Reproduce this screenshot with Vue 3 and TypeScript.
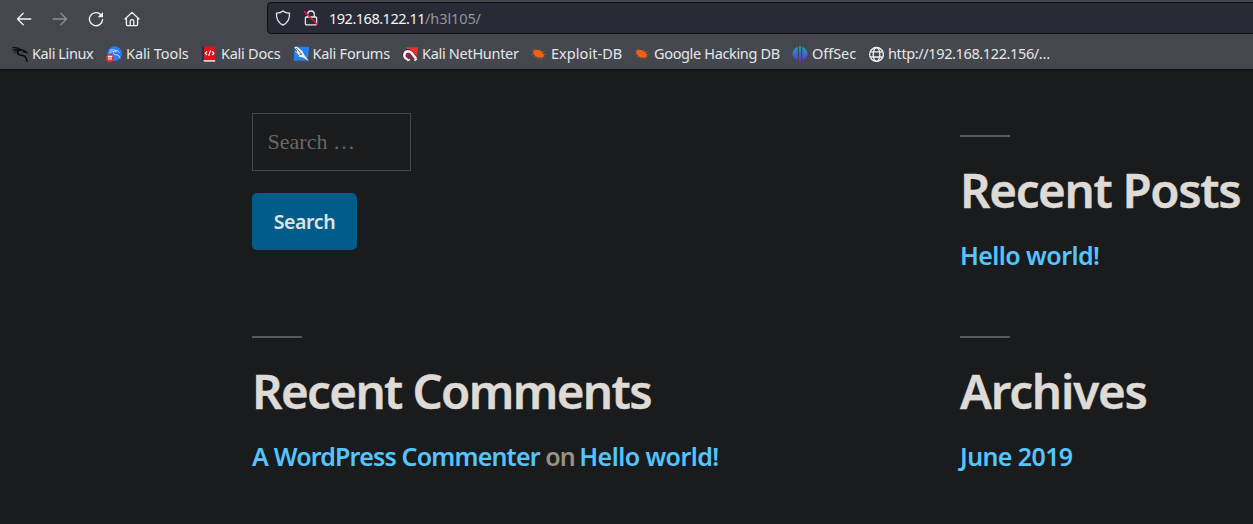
<script setup lang="ts">
interface Bookmark {
  label: string
  icon: 'kali' | 'tools' | 'docs' | 'forums' | 'nethunter' | 'bug' | 'offsec' | 'globe'
  width: number
  tracking: number
}

const bookmarks: Bookmark[] = [
  { label: 'Kali Linux', icon: 'kali', width: 94, tracking: -0.4 },
  { label: 'Kali Tools', icon: 'tools', width: 95, tracking: -0.1 },
  { label: 'Kali Docs', icon: 'docs', width: 91.5, tracking: -0.25 },
  { label: 'Kali Forums', icon: 'forums', width: 109.5, tracking: -0.25 },
  { label: 'Kali NetHunter', icon: 'nethunter', width: 129, tracking: -0.3 },
  { label: 'Exploit-DB', icon: 'bug', width: 103, tracking: 0.05 },
  { label: 'Google Hacking DB', icon: 'bug', width: 158, tracking: -0.35 },
  { label: 'OffSec', icon: 'offsec', width: 76, tracking: -0.05 },
  { label: 'http://192.168.122.156/…', icon: 'globe', width: 182, tracking: -0.38 },
]
</script>

<template>
  <div class="window">
    <header class="chrome">
      <div class="nav">
        <div class="buttons">
          <svg class="btn" viewBox="0 0 16 16"><path d="M14.8 8H1.7M7.2 2.3 1.5 8l5.7 5.7" /></svg>
          <svg class="btn dim" viewBox="0 0 16 16"><path d="M1.2 8h13.1M8.8 2.3 14.5 8l-5.7 5.7" /></svg>
          <svg class="btn" viewBox="0 0 16 16">
            <path d="M12.900 3.700A6.600 6.600 0 1 0 14.600 8.600" />
            <path d="M15 1v5.300H9.700z" class="solid" />
          </svg>
          <svg class="btn" viewBox="0 0 16 16">
            <path d="M1 8 8 1.400 15 8M2.400 7v6.300a1.300 1.300 0 0 0 1.300 1.300h8.600a1.300 1.300 0 0 0 1.300-1.300V7M6.200 14.500V10.500a1.800 1.800 0 0 1 3.600 0v4" />
          </svg>
        </div>
        <div class="address">
          <svg class="shield" viewBox="0 0 16 16"><path d="M8 .9C9.700 2.300 12 3 14.500 3.100c.3 5.400-1.300 9.500-6.500 12C2.800 12.600 1.200 8.500 1.500 3.100 4 3 6.300 2.300 8 .9z" /></svg>
          <svg class="lock" viewBox="0 0 16 16">
            <path d="M4.700 7V4.300a3.300 3.300 0 0 1 6.600 0V7M3.300 7h9.400a.9.9 0 0 1 .9.9v5.700a1.200 1.200 0 0 1-1.200 1.200H3.600a1.200 1.200 0 0 1-1.200-1.200V7.900a.9.9 0 0 1 .9-.9z" />
            <path d="M1.200 1.400 14.800 15" class="slash" />
          </svg>
          <span class="host">192.168.122.11</span><span class="path">/h3l105/</span>
        </div>
      </div>

      <nav class="bookmarks">
        <div v-for="b in bookmarks" :key="b.label" class="bookmark" :style="{ width: b.width + 'px' }">
          <svg v-if="b.icon === 'kali'" class="fav" viewBox="0 0 16 16" fill="none" stroke="#08090b" stroke-linecap="round">
            <path d="M.7 1.700C4 1.300 6.500 2 9 3.700" stroke-width="1.100" />
            <path d="M.8 4.300c3-1.300 5.500-.7 8 .2" stroke-width="1.100" />
            <path d="M2.200 6.800c1.400-1.200 2.600-1.800 4-2" stroke-width=".9" />
            <path d="M8 4.200c2.400-.9 4.200-.2 6.500 2.200l-3.300-.8" stroke-width="1.200" />
            <path d="M6.500 4.500C4.500 7.400 6 9.200 9.500 9.200c3.500.1 5 2.100 5.400 6" stroke-width="1.500" />
          </svg>
          <svg v-else-if="b.icon === 'tools'" class="fav" viewBox="0 0 16 16">
            <circle cx="8.700" cy="7.600" r="7.300" fill="#287cf4" />
            <path d="M3.500 4.500c3-1.300 5-.6 7 .7M3 7.200c2.700-2 5-1.900 7-1.500M8 5.200c-1.500 2.500.2 3.600 2.500 3.700 2.200.1 3.200 1.500 3.500 3.500M10 4.700c1.500-.2 2.500.6 3.500 2" fill="none" stroke="#d9e9ff" stroke-width=".9" />
            <circle cx="4" cy="11.900" r="4" fill="#e42f3b" />
            <path d="M1.700 10.300h4.600M3 10.300v3.600M5 10.300v3.600" stroke="#fff" stroke-width="1" fill="none" />
          </svg>
          <svg v-else-if="b.icon === 'docs'" class="fav" viewBox="0 0 16 16">
            <path d="M1.200.4h2.300v15.400l-2.300-1.200z" fill="#252b59" />
            <path d="M3 .4h11.200v13.500H3z" fill="#de1418" />
            <path d="M2 13.900h12.200v1.900H3.200z" fill="#d8d2d5" />
            <path d="m6 5.300-1.700 1.900 1.700 1.800M9.500 4.400 7.700 9.900M11.200 5.300l1.700 1.900-1.700 1.800" fill="none" stroke="#fff" stroke-width="1.200" />
          </svg>
          <svg v-else-if="b.icon === 'forums'" class="fav" viewBox="0 0 16 16">
            <path d="M1.500.8H16.400L14.500 14.800H.7z" fill="#2380f0" />
            <path d="M.7.900 4.200.8l5 4.200 2.300 4.200 4.500 6-6-3.700-4.200-1.100-3.800-4.700 1.300-.9z" fill="#f0f3f5" />
            <path d="m3 2 5.700 6.300M6.400 8.100l2.400.6" stroke="#344454" stroke-width=".8" />
            <path d="m.8 1.100 3 4.100-1 .8 3.100 4" stroke="#193050" stroke-width=".7" fill="none" />
          </svg>
          <svg v-else-if="b.icon === 'nethunter'" class="fav" viewBox="0 0 16 16">
            <path d="M3.500 1.200h12.800l-1.900 9.800-6-5z" fill="#f02f35" />
            <path d="M1.200 10.200C.2 5.800 3.500 3.200 7 4c2.700.6 4.300 3 7 6.800" fill="none" stroke="#20232d" stroke-width="1.300" />
            <path d="M6 13.200C.2 11.100 2.100 5.200 6.300 5.300c3.500 0 4.300 3.700 7.700 7.100" fill="none" stroke="#f3f0f1" stroke-width="2.700" />
            <path d="M7.500 12.100C3.300 11.200 4 7.300 6.400 7.600c2.200.2 3 4.300 6 6.600" fill="none" stroke="#a91635" stroke-width="1.500" />
            <path d="m5.300 14.800 2.600-1.500M12.400 14.500l2.500-1.600" stroke="#fff" stroke-width="1.500" />
          </svg>
          <svg v-else-if="b.icon === 'bug'" class="fav bug" viewBox="0 0 16 16">
            <path d="M2 5.400c1.600-2.200 4.700-2.200 7.400-.6 2.300 1.400 3.700 3.200 3.600 5.500-1.500 2-4.700 1.800-7 .7C3.700 9.900 2.300 8 2 5.400z" fill="#ee6216" />
            <path d="M2.700 5 .8 4.500M4.300 4 3 2.600M8.700 4.600l1.900-1.700M10.700 6.100l2.600-.8M12.400 8.400l2.700-.1M12.400 10l1.300 1.700M2.900 7.900l-2.200.7M4.700 10l-2.200 1.400M7.700 11.300l-1.300 1.800M10 11.300l.3 1.900" stroke="#b35829" stroke-width=".8" />
          </svg>
          <svg v-else-if="b.icon === 'offsec'" class="fav" viewBox="0 0 16 16">
            <defs>
              <linearGradient id="offsec" x1="0" y1="0" x2="0" y2="16" gradientUnits="userSpaceOnUse">
                <stop offset="0" stop-color="#18a6b6" /><stop offset=".5" stop-color="#3d6dcc" /><stop offset="1" stop-color="#6526cc" />
              </linearGradient>
            </defs>
            <path d="M5.700.7v14C-1.300 12-1.300 3.300 5.700.7zM10.300.7v14c7-2.700 7-11.400 0-14zM7.100.3h1.800v15.400H7.100z" fill="url(#offsec)" />
          </svg>
          <svg v-else class="fav" viewBox="0 0 16 16" fill="none" stroke="#f2f2f4" stroke-width="1.300">
            <circle cx="8.500" cy="8.400" r="6.900" /><ellipse cx="8.500" cy="8.400" rx="3.300" ry="6.900" /><path d="M2.300 5.800h12.400M2.300 11h12.400" />
          </svg>
          <span class="label" :style="{ letterSpacing: b.tracking + 'px' }">{{ b.label }}</span>
        </div>
      </nav>
    </header>

    <main class="widgets">
      <form class="search" @submit.prevent>
        <input type="text" placeholder="Search …" />
        <button type="submit">Search</button>
      </form>
      <section class="widget first-row">
        <h2 class="posts">Recent Posts</h2>
        <p><a>Hello world!</a></p>
      </section>
      <section class="widget">
        <h2 class="comments">Recent Comments</h2>
        <p><a class="author">A WordPress Commenter</a><span class="on">on</span><a>Hello world!</a></p>
      </section>
      <section class="widget">
        <h2 class="archives">Archives</h2>
        <p><a class="date">June 2019</a></p>
      </section>
    </main>
  </div>
</template>

<style>
body { background: #1a1b1c; overflow: hidden; }
</style>

<style scoped>
.window { width: 1253px; height: 524px; overflow: hidden; background: #1a1b1c; font-family: "Noto Sans", "Open Sans", sans-serif; }
.chrome { box-sizing: border-box; height: 70px; background: #45474e; border-bottom: 1px solid #0d0e11; font-size: 14.5px; color: #e6e6e8; overflow: hidden; }
.nav { display: flex; height: 37px; align-items: flex-start; }
.buttons { display: flex; gap: 20px; width: 251px; flex: none; padding: 11px 0 0 16px; }
.btn { width: 16px; height: 16px; fill: none; stroke: #f4f4f5; stroke-width: 1.3; stroke-linecap: round; stroke-linejoin: round; }
.btn .solid { fill: #f4f4f5; stroke: none; }
.dim { opacity: .42; }
.address { box-sizing: border-box; display: flex; align-items: center; flex: none; width: 1000px; height: 32px; margin-top: 2px; padding-left: 7px; background: #282a36; border: 1px solid #0e0f14; border-radius: 4px; }
.shield, .lock { width: 16px; height: 16px; fill: none; stroke: #e8e8ea; stroke-width: 1.3; stroke-linejoin: round; }
.lock { margin: 0 10px 0 12px; }
.slash { stroke: #e5174a; stroke-width: 1.5; }
.host { color: #f4f4f5; letter-spacing: -.49px; }
.path { color: #95969c; letter-spacing: -.1px; }
.bookmarks { display: flex; height: 33px; padding-left: 12px; align-items: center; white-space: nowrap; }
.bookmark { display: flex; align-items: center; gap: 4px; flex: none; }
.label { padding-bottom: 2px; }
.fav { width: 16px; height: 16px; flex: none; }
.widgets { display: grid; grid-template-columns: 708px 400px; grid-template-rows: 223px auto; padding: 43px 0 0 252px; }
.search { display: flex; flex-direction: column; align-items: flex-start; gap: 22px; }
.search input { box-sizing: border-box; width: 159px; height: 58px; padding: 0 14.6px; background: transparent; border: 1px solid #454749; border-radius: 0; outline: 0; font: 22px "Liberation Serif", serif; color: #ddd; }
.search input::placeholder { color: #6a6761; opacity: 1; }
.search button { width: 105px; height: 57px; padding: 0; border: 0; border-radius: 5px; background: #005c89; color: #e1e1df; font: 600 19.5px "Noto Sans", sans-serif; letter-spacing: -.4px; }
.widget::before { content: ""; display: block; width: 50px; height: 2px; background: #565b5f; }
.first-row { padding-top: 22px; }
h2 { margin: 24px 0 19px; height: 58px; font-size: 47.5px; line-height: 58px; font-weight: 600; color: #dedad5; white-space: nowrap; -webkit-text-stroke: .4px #dedad5; }
.posts { letter-spacing: -1.35px; }
.comments { letter-spacing: -1.64px; }
.archives { letter-spacing: -1.2px; }
p { margin: 0; font-size: 25px; line-height: 34px; font-weight: 600; color: #9b9184; white-space: nowrap; }
a { color: #54c5ff; letter-spacing: -.58px; }
.author { letter-spacing: -.83px; }
.date { letter-spacing: -.6px; }
.on { letter-spacing: -.9px; margin: 0 4.5px 0 5.5px; }
</style>
